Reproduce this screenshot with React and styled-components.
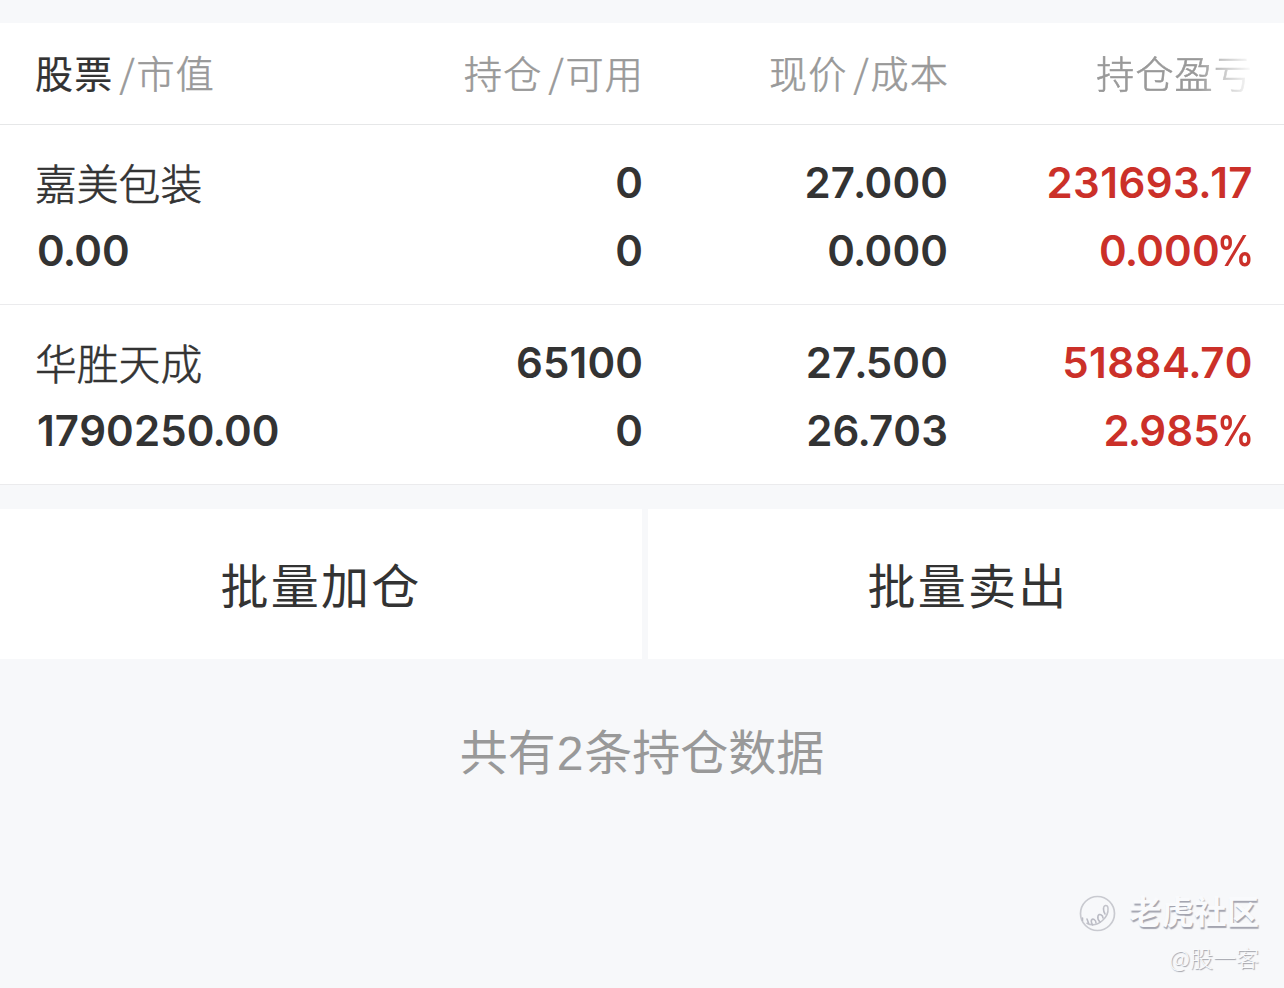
import React from 'react'
import styled, { createGlobalStyle } from 'styled-components'

const GlobalStyle = createGlobalStyle`
    * {
        box-sizing: border-box;
    }
    body {
        margin: 0;
        background: #f7f8fa;
        font-family: 'Noto Sans CJK SC', sans-serif;
        color: #333333;
    }
`
const Page = styled.div`
    display: flex;
    flex-direction: column;
    width: 1284px;
    height: 988px;
    padding-top: 23px;
    overflow: hidden;
    background: #f7f8fa;
`
const Columns = styled.div`
    display: grid;
    grid-template-columns: 303px 305px 305px 305px;
    padding-left: 35px;
    background: #ffffff;
    border-bottom: 1px solid #ebebed;
`
const Header = styled(Columns)`
    height: 102px;
    padding-bottom: 4px;
    align-items: center;
    border-bottom: 1px solid #e6e7e8;
    color: #999999;
    font-size: 38px;
    letter-spacing: 1.2px;
    line-height: 56px;
    font-weight: 300;
    -webkit-text-stroke: 0.6px currentColor;
`
const Row = styled(Columns)`
    height: 180px;
    padding-top: 24px;
`
const HeadCell = styled.div`
    margin-right: ${p => (p.$fade ? 0 : '-1px')};
    text-align: ${p => (p.$left ? 'left' : 'right')};
    white-space: nowrap;
    b {
        color: #333333;
        font-weight: 400;
        -webkit-text-stroke: 0.2px currentColor;
    }
    i {
        font-style: normal;
        margin: 0 1px 0 6px;
    }
    ${p =>
        p.$fade &&
        `
        -webkit-mask-image: linear-gradient(to right, #000 82%, transparent 100%);
        mask-image: linear-gradient(to right, #000 82%, transparent 100%);
    `}
`
const Cell = styled.div`
    display: flex;
    flex-direction: column;
    align-items: ${p => (p.$left ? 'flex-start' : 'flex-end')};
    color: ${p => (p.$up ? '#cb3029' : '#333333')};
`
const NumBox = styled.span`
    height: 68px;
    padding-left: ${p => (p.$left ? '2px' : 0)};
    line-height: 68px;
    font-family: Inter, sans-serif;
    font-size: 42px;
    font-weight: 570;
    font-kerning: none;
    letter-spacing: ${p => (p.$wide ? '0.45px' : '0.1px')};
`
const Dot = styled.span`
    margin: 0 -2px;
`
const Percent = styled.span`
    display: inline-block;
    margin: 0 -1px 0 -8px;
    transform: scaleX(0.88);
    transform-origin: right center;
`
const Name = styled.span`
    height: 68px;
    line-height: 66px;
    font-size: 41.8px;
    font-weight: 300;
    -webkit-text-stroke: 0.6px currentColor;
`
const Actions = styled.div`
    display: grid;
    grid-template-columns: 642px 640px;
    column-gap: 6px;
    margin-top: 24px;
`
const Action = styled.button`
    height: 150px;
    padding: 0 0 3px;
    border: 0;
    background: #ffffff;
    color: #333333;
    font-family: inherit;
    font-size: 48px;
    letter-spacing: 2.2px;
    line-height: 70px;
`
const Total = styled.div`
    margin-top: 55px;
    line-height: 70px;
    text-align: center;
    color: #999999;
    font-size: 48px;
    span {
        margin: 0 1px;
        font-family: 'Liberation Sans', sans-serif;
    }
`
const Watermark = styled.div`
    display: flex;
    flex-direction: column;
    align-items: flex-end;
    margin-top: auto;
    padding: 0 25px 13px 0;
    color: #f9fafc;
    text-shadow: 1px 1px 1px #9fa0a8;
`
const Brand = styled.div`
    display: flex;
    align-items: center;
    gap: 12px;
    height: 46px;
    font-size: 32.5px;
    font-weight: 700;
    line-height: 46px;
    text-shadow: 1px 2px 1px #a4a5b0;
    svg {
        margin-top: 6px;
    }
`
const Author = styled.div`
    height: 36px;
    margin-top: 6px;
    font-size: 23px;
    line-height: 36px;
    font-weight: 300;
`

const holdings = [
    {
        name: '嘉美包装',
        value: '0.00',
        held: '0',
        usable: '0',
        price: '27.000',
        cost: '0.000',
        profit: '231693.17',
        rate: '0.000',
    },
    {
        name: '华胜天成',
        value: '1790250.00',
        held: '65100',
        usable: '0',
        price: '27.500',
        cost: '26.703',
        profit: '51884.70',
        rate: '2.985',
    },
]

const Num = ({ value, left, wide, percent }) => {
    const [whole, decimals] = value.split('.')
    return (
        <NumBox $left={left} $wide={wide}>
            {whole}
            {decimals && <Dot>.</Dot>}
            {decimals}
            {percent && <Percent>%</Percent>}
        </NumBox>
    )
}

const TigerLogo = () => (
    <svg width="40" height="40" viewBox="0 0 40 40" fill="none">
        <circle cx="20.5" cy="20.5" r="17" stroke="#c9cad0" strokeWidth="1.7" />
        <path
            d="M26.500 16c0-4 4-5 4.500-1 .5 5-1.500 9-5.500 12.500-4 3.500-10 6-16 2.500"
            stroke="#c3c4cb"
            strokeWidth="1.5"
        />
        <path
            d="M26.500 16c0 2 0 3 1.500 5M26 25c0-3-4-5-5-2-.6 2 0 4 2 6M19 30c0-3-3-5-4.500-3-.8 1.500 0 3 1 5M10 26l1.500 4M5.500 25v2.500"
            stroke="#bbbcc5"
            strokeWidth="1.6"
            strokeLinecap="round"
        />
    </svg>
)

export default function App() {
    return (
        <Page>
            <GlobalStyle />
            <Header>
                <HeadCell $left>
                    <b>股票</b>
                    <i>/</i>市值
                </HeadCell>
                <HeadCell>
                    持仓<i>/</i>可用
                </HeadCell>
                <HeadCell>
                    现价<i>/</i>成本
                </HeadCell>
                <HeadCell $fade>持仓盈亏</HeadCell>
            </Header>
            {holdings.map(item => (
                <Row key={item.name}>
                    <Cell $left>
                        <Name>{item.name}</Name>
                        <Num left value={item.value} />
                    </Cell>
                    <Cell>
                        <Num value={item.held} />
                        <Num value={item.usable} />
                    </Cell>
                    <Cell>
                        <Num value={item.price} />
                        <Num value={item.cost} />
                    </Cell>
                    <Cell $up>
                        <Num wide value={item.profit} />
                        <Num percent value={item.rate} />
                    </Cell>
                </Row>
            ))}
            <Actions>
                <Action>批量加仓</Action>
                <Action>批量卖出</Action>
            </Actions>
            <Total>
                共有<span>2</span>条持仓数据
            </Total>
            <Watermark>
                <Brand>
                    <TigerLogo />
                    老虎社区
                </Brand>
                <Author>@股一客</Author>
            </Watermark>
        </Page>
    )
}
